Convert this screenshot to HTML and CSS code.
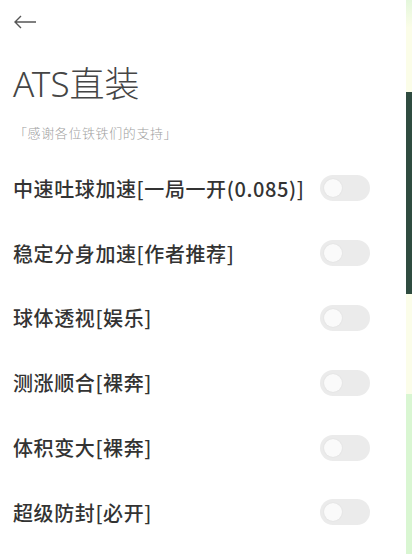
FILE: index.html
```html
<!DOCTYPE html>
<html lang="zh-CN">
<head>
  <meta charset="UTF-8">
  <title>ATS直装</title>
  <meta name="viewport" content="width=device-width, initial-scale=1.0">
  <link rel="stylesheet" href="styles.css">
</head>
<body>
  <div class="page">
    <div class="main">
      <div class="topbar">
        <svg class="back" width="24" height="14" viewBox="0 0 24 14">
          <path d="M23 7H2M8 1L2 7l6 6" fill="none" stroke="#555" stroke-width="1.4"/>
        </svg>
      </div>

      <h1 class="titulo">ATS直装</h1>
      <div class="subtitulo">「感谢各位铁铁们的支持」</div>

      <div class="lista">
        <div class="fila">
          <span class="texto">中速吐球加速[一局一开(0.085)]</span>
          <span class="toggle"><span class="knob"></span></span>
        </div>
        <div class="fila">
          <span class="texto">稳定分身加速[作者推荐]</span>
          <span class="toggle"><span class="knob"></span></span>
        </div>
        <div class="fila">
          <span class="texto">球体透视[娱乐]</span>
          <span class="toggle"><span class="knob"></span></span>
        </div>
        <div class="fila">
          <span class="texto">测涨顺合[裸奔]</span>
          <span class="toggle"><span class="knob"></span></span>
        </div>
        <div class="fila">
          <span class="texto">体积变大[裸奔]</span>
          <span class="toggle"><span class="knob"></span></span>
        </div>
        <div class="fila">
          <span class="texto">超级防封[必开]</span>
          <span class="toggle"><span class="knob"></span></span>
        </div>
      </div>
    </div>

    <div class="borde">
      <div class="b1"></div>
      <div class="b2"></div>
      <div class="b3"></div>
      <div class="b4"></div>
    </div>
  </div>
</body>
</html>
```

FILE: styles.css
```css
body {
  margin: 0;
  background-color: #ffffff;
  font-family: "Noto Sans", "Noto Sans CJK SC", sans-serif;
  color: #333;
  overflow: hidden;
}

.page {
  display: flex;
  height: 554px;
}

.main {
  flex: 1;
  padding: 0 36px 0 13px;
}

.topbar {
  height: 44px;
  display: flex;
  align-items: center;
}

.back {
  display: block;
}

.titulo {
  margin: 20px 0 0 0;
  font-size: 35px;
  line-height: 40px;
  font-weight: 300;
  color: #454545;
}

.subtitulo {
  margin-top: 19px;
  margin-left: 1px;
  font-size: 13px;
  line-height: 20px;
  letter-spacing: 0.6px;
  color: #a0a0a0;
  font-family: "Noto Sans CJK SC", sans-serif;
  font-weight: 300;
}

.lista {
  margin-top: 13px;
}

.fila {
  height: 64.8px;
  display: flex;
  align-items: center;
  justify-content: space-between;
}

.texto {
  font-family: "Noto Sans CJK SC", sans-serif;
  font-size: 20px;
  font-weight: 500;
  letter-spacing: 0.6px;
  color: #333;
  white-space: nowrap;
}

.toggle {
  width: 50px;
  height: 26px;
  border-radius: 13px;
  background-color: #ebebeb;
  display: flex;
  align-items: center;
  padding-left: 4px;
  box-sizing: border-box;
  flex-shrink: 0;
}

.knob {
  width: 18px;
  height: 18px;
  border-radius: 50%;
  background-color: #fafafa;
  box-shadow: 0 0 2px rgba(0, 0, 0, 0.08);
}

.borde {
  width: 6px;
  display: flex;
  flex-direction: column;
}

.b1 {
  height: 92px;
  background: linear-gradient(#e4f7dc, #fbfde8 30%);
}

.b2 {
  height: 202px;
  background-color: #2f4c40;
}

.b3 {
  height: 100px;
  background-color: #fbfde9;
}

.b4 {
  flex: 1;
  background-color: #d9f6d2;
}
```
